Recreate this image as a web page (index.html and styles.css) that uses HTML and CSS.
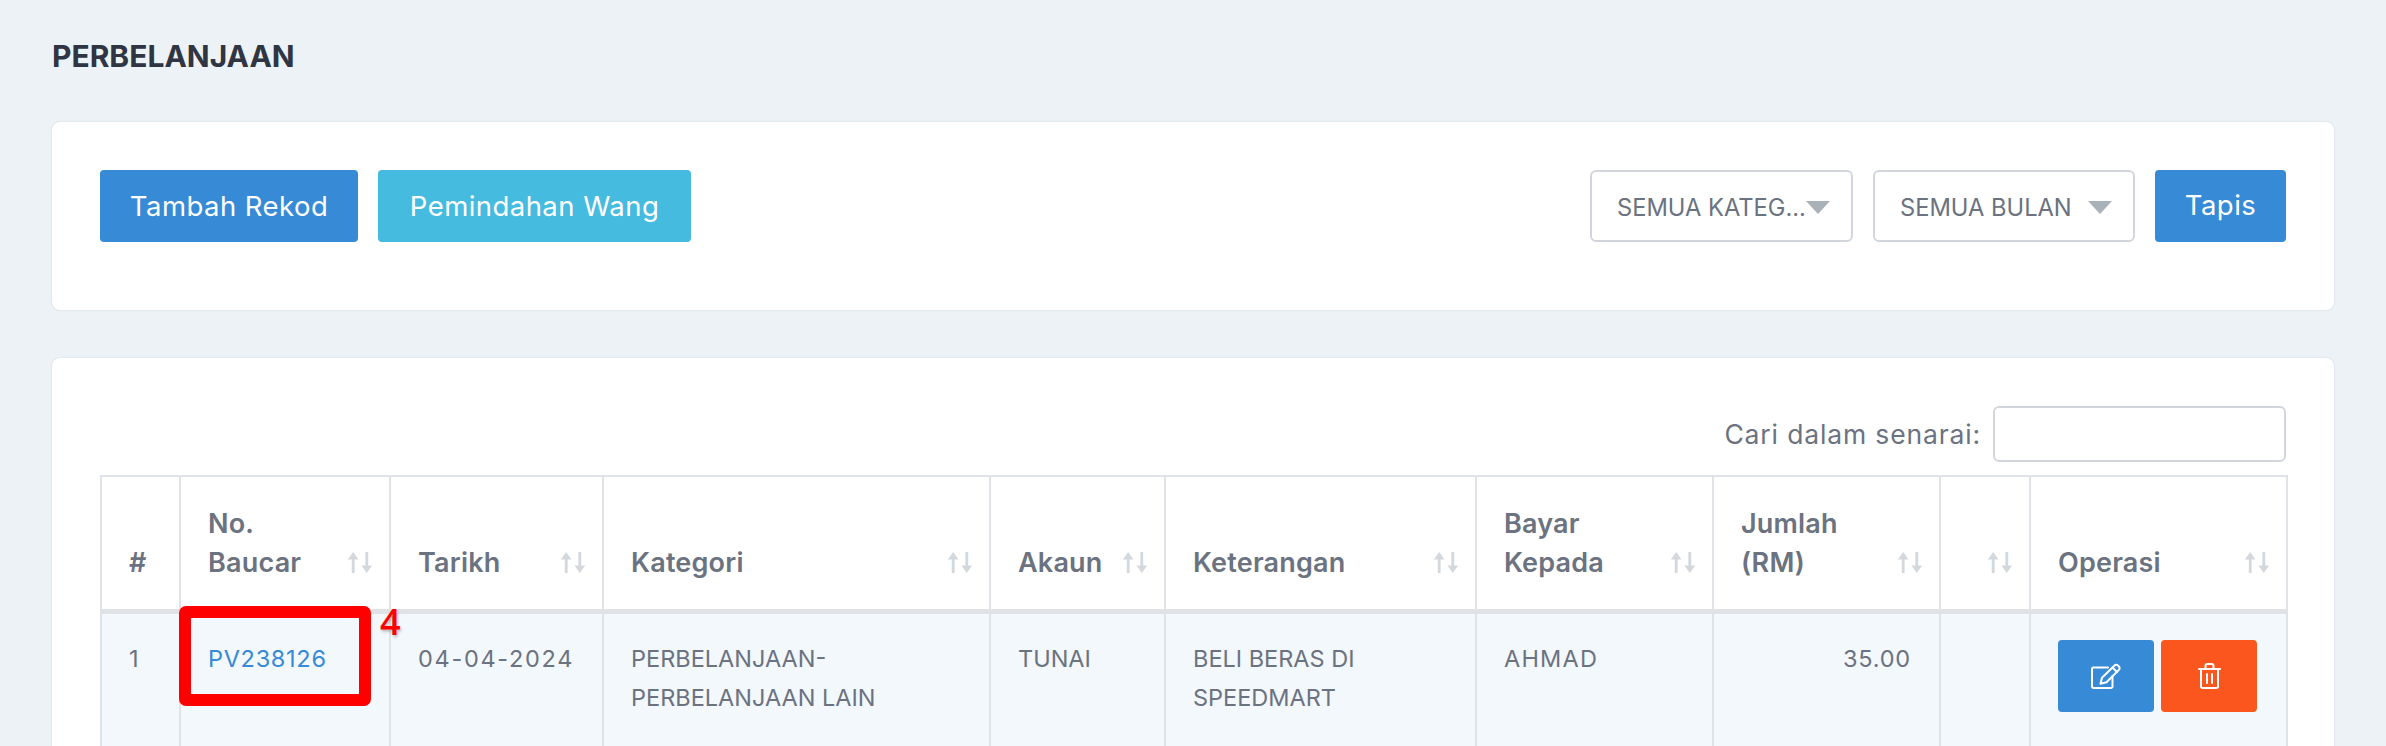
FILE: index.html
```html
<!DOCTYPE html>
<html lang="ms">
<head>
<meta charset="utf-8">
<title>Perbelanjaan</title>
<link rel="stylesheet" href="styles.css">
</head>
<body>
<main class="page">
  <h1 class="title">PERBELANJAAN</h1>
  <section class="card toolbar">
    <div class="group">
      <a class="btn btn-primary btn-add">Tambah Rekod</a>
      <a class="btn btn-info btn-move">Pemindahan Wang</a>
    </div>
    <div class="group">
      <div class="select select-cat"><span class="select-text">SEMUA KATEG...</span><span class="caret"></span></div>
      <div class="select select-month"><span class="select-text">SEMUA BULAN</span><span class="caret"></span></div>
      <a class="btn btn-primary btn-filter">Tapis</a>
    </div>
  </section>
  <section class="card list">
    <div class="search"><label class="search-label">Cari dalam senarai:</label><div class="search-input"></div></div>
    <table class="grid">
      <colgroup>
        <col class="c1"><col class="c2"><col class="c3"><col class="c4"><col class="c5"><col class="c6"><col class="c7"><col class="c8"><col class="c9"><col class="c10">
      </colgroup>
      <thead>
        <tr>
          <th><div class="th-in"><span>#</span></div></th>
          <th><div class="th-in"><span>No.<br>Baucar</span><svg class="sort" viewBox="0 0 24 21"><use href="#sort"/></svg></div></th>
          <th><div class="th-in"><span>Tarikh</span><svg class="sort" viewBox="0 0 24 21"><use href="#sort"/></svg></div></th>
          <th><div class="th-in"><span>Kategori</span><svg class="sort" viewBox="0 0 24 21"><use href="#sort"/></svg></div></th>
          <th><div class="th-in"><span>Akaun</span><svg class="sort" viewBox="0 0 24 21"><use href="#sort"/></svg></div></th>
          <th><div class="th-in"><span>Keterangan</span><svg class="sort" viewBox="0 0 24 21"><use href="#sort"/></svg></div></th>
          <th><div class="th-in"><span>Bayar<br>Kepada</span><svg class="sort" viewBox="0 0 24 21"><use href="#sort"/></svg></div></th>
          <th><div class="th-in"><span>Jumlah<br>(RM)</span><svg class="sort" viewBox="0 0 24 21"><use href="#sort"/></svg></div></th>
          <th><div class="th-in th-end"><svg class="sort" viewBox="0 0 24 21"><use href="#sort"/></svg></div></th>
          <th><div class="th-in"><span>Operasi</span><svg class="sort" viewBox="0 0 24 21"><use href="#sort"/></svg></div></th>
        </tr>
      </thead>
      <tbody>
        <tr class="row">
          <td>1</td>
          <td class="td-voucher"><a class="voucher">PV238126</a><span class="callout"></span><span class="callout-num">4</span></td>
          <td class="date">04-04-2024</td>
          <td>PERBELANJAAN-<br>PERBELANJAAN LAIN</td>
          <td>TUNAI</td>
          <td>BELI BERAS DI<br>SPEEDMART</td>
          <td class="payee">AHMAD</td>
          <td class="num">35.00</td>
          <td></td>
          <td class="ops">
            <div class="ops-row">
              <a class="btn-op btn-primary"><svg class="ico-edit" viewBox="0 0 30 26" fill="none" stroke="#fff" stroke-width="2" stroke-linejoin="round" stroke-linecap="round"><path d="M17 4.500H2.500a1.500 1.500 0 0 0-1.500 1.500v17.500a1.500 1.500 0 0 0 1.500 1.500h17.500a1.500 1.500 0 0 0 1.500-1.500V13"/><path d="M23.500 2.500a2.400 2.400 0 0 1 3.400 0l1 1a2.400 2.400 0 0 1 0 3.400L15.500 19.300l-6 1.500 1.500-6z"/><path d="M21.500 4.500l4.500 4.500"/></svg></a>
              <a class="btn-op btn-danger"><svg class="ico-trash" viewBox="0 0 23 26" fill="none" stroke="#fff" stroke-width="2" stroke-linejoin="round" stroke-linecap="round"><path d="M1 6h21"/><path d="M7.500 6V3a2 2 0 0 1 2-2h4a2 2 0 0 1 2 2v3"/><path d="M3 6v17.500A1.500 1.500 0 0 0 4.500 25h14a1.500 1.500 0 0 0 1.500-1.500V6"/><path d="M9 11v9M14 11v9"/></svg></a>
            </div>
          </td>
        </tr>
      </tbody>
    </table>
  </section>
</main>
<svg class="defs" width="0" height="0" aria-hidden="true">
  <symbol id="sort" viewBox="0 0 24 21">
    <path d="M5.200 0 10.500 7.500H6.600V21H3.800V7.500H-.1z" fill="#d3d8dd"/>
    <path d="M17.400 0h2.800v13.500h3.900l-5.300 7.500-5.300-7.500h3.900z" fill="#d3d8dd"/>
  </symbol>
</svg>
</body>
</html>
```

FILE: styles.css
```css
* { box-sizing: border-box; }
html, body { margin: 0; height: 746px; overflow: hidden; }
body {
  background: #edf2f6;
  font-family: Inter, "Noto Sans", sans-serif;
  color: #6b7280;
}
.page { padding: 0 52px; }
.title {
  margin: 0;
  padding: 33px 0 42px;
  font-size: 30px;
  line-height: 47px;
  font-weight: 700;
  color: #2f3542;
}
.card {
  background: #fff;
  border-radius: 8px;
  box-shadow: 0 0 2px rgba(60, 80, 100, .2);
  margin-bottom: 48px;
}
.toolbar {
  height: 188px;
  padding: 48px;
  display: flex;
  justify-content: space-between;
  align-items: flex-start;
}
.group { display: flex; gap: 20px; }
.btn {
  height: 72px;
  border-radius: 4px;
  color: #fff;
  font-size: 27.500px;
  font-weight: 400;
  letter-spacing: .45px;
  display: flex;
  align-items: center;
  justify-content: center;
}
.btn-primary { background: #368ad6; }
.btn-info { background: #46bbe0; }
.btn-danger { background: #fa561e; }
.btn-add { width: 258px; }
.btn-move { width: 313px; }
.btn-filter { width: 131px; padding-bottom: 2px; }
.select {
  height: 72px;
  border: 2px solid #d2d6dc;
  border-radius: 6px;
  display: flex;
  align-items: center;
  justify-content: space-between;
  padding: 3px 21px 0 25px;
  font-size: 23.700px;
}
.select-cat { width: 263px; }
.select-month { width: 262px; }
.select-text { white-space: nowrap; }
.caret {
  flex: none;
  width: 0;
  height: 0;
  border-left: 12px solid transparent;
  border-right: 12px solid transparent;
  border-top: 13px solid #a9b1b9;
}
.list { padding: 48px; height: 500px; }
.search {
  display: flex;
  justify-content: flex-end;
  align-items: center;
  gap: 12px;
  margin-bottom: 13px;
}
.search-label { font-size: 26.500px; letter-spacing: .85px; }
.search-input {
  width: 293px;
  height: 56px;
  border: 2px solid #d2d6dc;
  border-radius: 6px;
}
.grid {
  width: 2186px;
  table-layout: fixed;
  border-collapse: collapse;
  font-size: 23.500px;
  line-height: 39px;
}
.c1 { width: 79px; }
.c2 { width: 210px; }
.c3 { width: 213px; }
.c4 { width: 387px; }
.c5 { width: 175px; }
.c6 { width: 311px; }
.c7 { width: 237px; }
.c8 { width: 227px; }
.c9 { width: 90px; }
.c10 { width: 257px; }
.grid th, .grid td {
  border: 2px solid #dfe3e8;
  text-align: left;
}
.grid th {
  vertical-align: bottom;
  padding: 27px 17px 27px 27px;
  font-size: 27px;
  font-weight: 600;
  letter-spacing: .2px;
  background: #fff;
  border-bottom-width: 5px;
}
.th-in {
  display: flex;
  justify-content: space-between;
  align-items: flex-end;
}
.th-end { justify-content: flex-end; }
.sort { width: 24px; height: 21px; flex: none; margin-bottom: 9px; }
.row { height: 190px; }
.grid td {
  vertical-align: top;
  padding: 25px 27px;
  background: #f3f8fc;
  font-weight: 400;
}
.grid td.date { letter-spacing: 1.7px; }
.grid td.payee { letter-spacing: 1.2px; }
.grid td.num { text-align: right; letter-spacing: .8px; padding-right: 28px; }
.grid td.ops { padding: 26px 27px; }
.ops-row { display: flex; gap: 7px; }
.btn-op {
  width: 96px;
  height: 72px;
  border-radius: 4px;
  display: flex;
  align-items: center;
  justify-content: center;
}
.ico-edit { width: 30px; height: 26px; }
.ico-trash { width: 23px; height: 26px; }
.defs { position: absolute; }
.td-voucher { position: relative; }
.voucher { color: #368ad6; letter-spacing: .7px; }
.callout {
  position: absolute;
  left: -2px;
  top: -8px;
  width: 192px;
  height: 100px;
  border: 12px solid #f00;
  border-radius: 7px;
}
.callout-num {
  position: absolute;
  left: 199px;
  top: -10px;
  color: #f00;
  font-family: "Open Sans", sans-serif;
  font-size: 36px;
  line-height: 36px;
  font-weight: 600;
  text-shadow: 1px 2px 3px rgba(0, 0, 0, .25);
}
```
